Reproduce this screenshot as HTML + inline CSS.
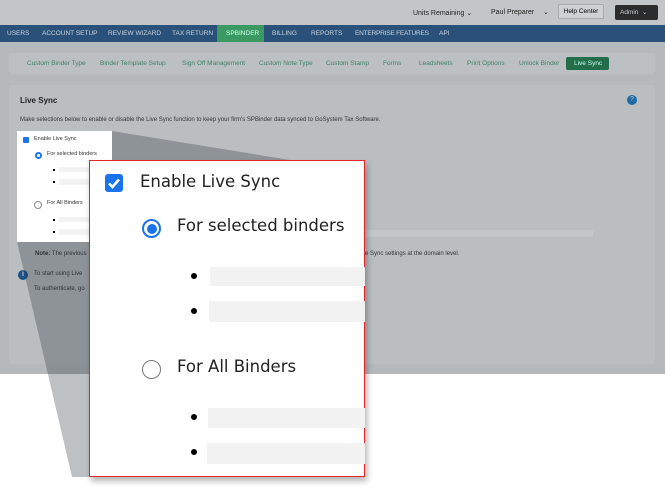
<!DOCTYPE html>
<html><head><meta charset="utf-8"><style>
*{margin:0;padding:0;box-sizing:border-box}
body{width:665px;height:502px;background:#fff;font-family:"Liberation Sans",sans-serif;position:relative;overflow:hidden}
.a{position:absolute}
.top{left:0;top:0;width:665px;height:25px;background:#c3c6c8}
.nav{left:0;top:25px;width:665px;height:17px;background:#2a5179;color:#c9d3dd;font-size:6.5px}
.nav span{position:absolute;top:5px}
.grey{left:0;top:42px;width:665px;height:332px;background:#b5b9bb}
.sub{left:9px;top:53px;width:646px;height:21px;background:#bcc0c3;border-radius:3px;font-size:6.5px;color:#3f8067}
.sub span{position:absolute;top:7px}
.panel{left:9px;top:85px;width:646px;height:279px;background:#babec1;border-radius:3px}
.t{font-size:6px;color:#333}
.small{left:17px;top:131px;width:95px;height:111px;background:#fff;font-size:5.5px;color:#333}
.big{left:89px;top:160px;width:276px;height:317px;background:#fff;border:1px solid #e0262a;box-shadow:2px 4px 6px rgba(0,0,0,.3);font-family:"DejaVu Sans","Liberation Sans",sans-serif;color:#222}
.bar{background:#f2f2f2;position:absolute}
.dot{position:absolute;width:6px;height:6px;border-radius:50%;background:#000}
</style></head><body>
<div class="a top"></div>
<div class="a" style="left:413px;top:9px;font-size:7px;color:#222">Units Remaining ⌄</div>
<div class="a" style="left:491px;top:9px;font-size:7px;color:#222">Paul Preparer</div>
<div class="a" style="left:543px;top:8px;font-size:7px;color:#222">⌄</div>
<div class="a" style="left:558px;top:4px;width:46px;height:15px;border:1px solid #aaa;background:#cfd2d4;font-size:6.5px;text-align:center;line-height:13px;border-radius:2px">Help Center</div>
<div class="a" style="left:615px;top:5px;width:43px;height:15px;background:#2a2c2e;color:#ccc;font-size:6.5px;line-height:15px;padding-left:5px;border-radius:2px">Admin &nbsp;⌄</div>
<div class="a nav">
<span style="left:7px">USERS</span><span style="left:42px">ACCOUNT SETUP</span><span style="left:108px">REVIEW WIZARD</span><span style="left:172px">TAX RETURN</span>
<span style="left:217px;top:0;height:17px;width:47px;background:#3a9a62;padding:5px 0 0 9px;color:#cfe">SPBINDER</span>
<span style="left:272px">BILLING</span><span style="left:311px">REPORTS</span><span style="left:355px;letter-spacing:-0.2px">ENTERPRISE FEATURES</span><span style="left:439px">API</span></div>
<div class="a grey"></div>
<div class="a sub"><span style="left:18px">Custom Binder Type</span><span style="left:91px">Binder Template Setup</span><span style="left:173px">Sign Off Management</span><span style="left:250px">Custom Note Type</span><span style="left:317px">Custom Stamp</span><span style="left:374px">Forms</span><span style="left:410px">Leadsheets</span><span style="left:458px">Print Options</span><span style="left:510px">Unlock Binder</span>
<span style="left:557px;top:4px;width:43px;height:13px;background:#226e4a;color:#cfe;border-radius:2px;padding:3px 0 0 8px">Live Sync</span></div>
<div class="a panel"></div>
<div class="a" style="left:20px;top:96px;font-size:8px;font-weight:bold;color:#222">Live Sync</div>
<div class="a" style="left:627px;top:95px;width:10px;height:10px;border-radius:50%;background:#1f6aa5;color:#bcd;font-size:7px;text-align:center;line-height:10px">?</div>
<div class="a t" style="left:20px;top:117px">Make selections below to enable or disable the Live Sync function to keep your firm's SPBinder data synced to GoSystem Tax Software.</div>
<div class="a" style="left:365px;top:230px;width:228px;height:7px;background:#c2c6c8"></div>
<div class="a t" style="left:35px;top:251px"><b>Note:</b> The previous</div>
<div class="a t" style="left:365px;top:251px">e Sync settings at the domain level.</div>
<div class="a" style="left:18px;top:270px;width:10px;height:10px;border-radius:50%;background:#1d5288;color:#ccd;font-size:7px;font-weight:bold;text-align:center;line-height:10px">i</div>
<div class="a t" style="left:34px;top:271px">To start using Live</div>
<div class="a t" style="left:34px;top:286px">To authenticate, go</div>
<svg class="a" style="left:0;top:0" width="665" height="502"><polygon points="17,131 112,131 290,160 89,160 89,477 72,477 17,242" fill="rgba(40,50,60,0.3)"/></svg>
<div class="a small">
<div class="a" style="left:6px;top:6px;width:6px;height:6px;background:#1a73e8;border-radius:1px"></div><div class="a" style="left:17px;top:5px">Enable Live Sync</div>
<div class="a" style="left:18px;top:21px;width:7px;height:7px;border-radius:50%;border:2px solid #1a73e8;background:#fff"></div><div class="a" style="left:30px;top:20px">For selected binders</div>
<div class="a" style="left:36px;top:38px;width:2px;height:2px;background:#000"></div><div class="bar" style="left:42px;top:36px;width:60px;height:5px"></div>
<div class="a" style="left:36px;top:50px;width:2px;height:2px;background:#000"></div><div class="bar" style="left:42px;top:48px;width:60px;height:6px"></div>
<div class="a" style="left:17px;top:70px;width:8px;height:8px;border-radius:50%;border:1px solid #888"></div><div class="a" style="left:30px;top:69px">For All Binders</div>
<div class="a" style="left:36px;top:88px;width:2px;height:2px;background:#000"></div><div class="bar" style="left:42px;top:86px;width:60px;height:5px"></div>
<div class="a" style="left:36px;top:100px;width:2px;height:2px;background:#000"></div><div class="bar" style="left:42px;top:98px;width:60px;height:6px"></div>
</div>
<div class="a big">
<div class="a" style="left:15px;top:13px;width:18px;height:18px;background:#1a73e8;border-radius:3px"><svg width="18" height="18"><path d="M4 9.5 L7.5 13 L14 5.5" stroke="#fff" stroke-width="2.6" fill="none"/></svg></div>
<div class="a" style="left:50px;top:11px;font-size:16.5px">Enable Live Sync</div>
<div class="a" style="left:52px;top:58px;width:19px;height:19px;border-radius:50%;border:2px solid #1a73e8;background:#fff"><div style="margin:2.5px;width:10px;height:10px;border-radius:50%;background:#1a73e8"></div></div>
<div class="a" style="left:87px;top:55px;font-size:16.5px">For selected binders</div>
<div class="dot" style="left:101px;top:112px"></div><div class="bar" style="left:120px;top:106px;width:155px;height:19px"></div>
<div class="dot" style="left:101px;top:147px"></div><div class="bar" style="left:119px;top:140px;width:156px;height:21px"></div>
<div class="a" style="left:52px;top:199px;width:19px;height:19px;border-radius:50%;border:1.5px solid #777"></div>
<div class="a" style="left:87px;top:196px;font-size:16.5px">For All Binders</div>
<div class="dot" style="left:101px;top:253px"></div><div class="bar" style="left:118px;top:247px;width:157px;height:20px"></div>
<div class="dot" style="left:101px;top:288px"></div><div class="bar" style="left:117px;top:282px;width:158px;height:21px"></div>
</div>
</body></html>
